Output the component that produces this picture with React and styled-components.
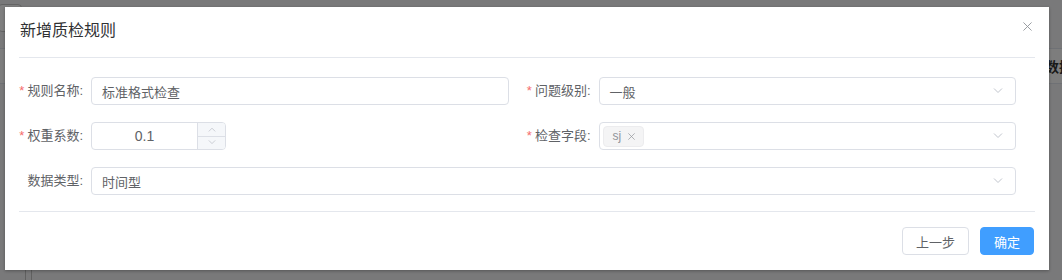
import React from "react";
import styled, { createGlobalStyle } from "styled-components";

const GlobalStyle = createGlobalStyle`
  html, body {
    margin: 0;
    padding: 0;
    width: 1062px;
    height: 280px;
    overflow: hidden;
  }
  body {
    font-family: "Liberation Sans", "Noto Sans CJK SC", sans-serif;
    background: #f2f3f5;
  }
`;

const Page = styled.div`
  position: relative;
  width: 1062px;
  height: 280px;
  overflow: hidden;
  background: #f2f3f5;
`;

const BackToolbar = styled.div`
  height: 48px;
  display: flex;
  align-items: flex-start;
  padding: 4px 0 0 0;
  box-sizing: border-box;
`;

const BackButton = styled.div`
  width: 22px;
  height: 26px;
  margin-left: -2px;
  border: 1px solid #c8c8c8;
  border-radius: 4px;
  background: #fff;
`;

const BackTableHead = styled.div`
  height: 36px;
  display: flex;
  align-items: center;
  border-top: 1px solid #dfe3ea;
  border-bottom: 1px solid #dfe3ea;
  background: #fafafa;
  box-sizing: border-box;
  overflow: hidden;
`;

const BackCell = styled.div`
  flex: 0 0 ${(p) => p.w}px;
  font-size: 14px;
  font-weight: bold;
  color: #333;
  white-space: nowrap;
  overflow: hidden;
`;

const BackBody = styled.div`
  display: flex;
  height: 200px;
`;

const BackLine = styled.div`
  margin-left: ${(p) => p.ml}px;
  width: 1px;
  background: #c0c0c0;
`;

const Mask = styled.div`
  position: absolute;
  inset: 0;
  background: rgba(0, 0, 0, 0.5);
`;

const Dialog = styled.div`
  position: absolute;
  top: 7px;
  left: 5px;
  width: 1044px;
  background: #fff;
  box-shadow: 0 1px 3px rgba(0, 0, 0, 0.3);
`;

const Header = styled.div`
  display: flex;
  justify-content: space-between;
  align-items: flex-start;
  padding: 12px 17px 14px 15px;
`;

const Title = styled.span`
  font-size: 16px;
  line-height: 24px;
  color: #303133;
`;

const Close = styled.span`
  display: flex;
  margin-top: 3px;
  color: #909399;
`;

const Divider = styled.div`
  height: 1px;
  margin: 0 14px;
  background: #e4e7ed;
`;

const Form = styled.div`
  display: grid;
  grid-template-columns: 1fr 1fr;
  column-gap: 10px;
  row-gap: 17px;
  padding: 19px 33px 16px 6px;
`;

const Item = styled.div`
  display: flex;
  align-items: center;
  height: 28px;
  grid-column: ${(p) => (p.wide ? "1 / span 2" : "auto")};
`;

const Label = styled.label`
  flex: 0 0 80px;
  box-sizing: border-box;
  padding-right: 8px;
  text-align: right;
  font-size: 13px;
  line-height: 28px;
  color: #606266;
  white-space: nowrap;
`;

const Star = styled.span`
  color: #f56c6c;
  margin-right: 3px;
`;

const Field = styled.div`
  flex: 1;
  height: 28px;
  box-sizing: border-box;
  border: 1px solid #dcdfe6;
  border-radius: 4px;
  display: flex;
  align-items: center;
  padding: 0 ${(p) => (p.select ? "12px" : "10px")} 0 ${(p) => (p.tags ? "3px" : "10px")};
  font-size: 13px;
  color: #606266;
  background: #fff;
`;

const Value = styled.span`
  flex: 1;
  white-space: nowrap;
`;

const NumberBox = styled.div`
  flex: 0 0 135px;
  height: 28px;
  box-sizing: border-box;
  border: 1px solid #dcdfe6;
  border-radius: 4px;
  display: flex;
  overflow: hidden;
  font-size: 14px;
  color: #606266;
`;

const NumberValue = styled.div`
  flex: 1;
  display: flex;
  align-items: center;
  justify-content: center;
`;

const Steps = styled.div`
  flex: 0 0 27px;
  display: flex;
  flex-direction: column;
  border-left: 1px solid #dcdfe6;
  background: #f5f7fa;
`;

const Step = styled.div`
  flex: 1;
  display: flex;
  align-items: center;
  justify-content: center;
  color: #c0c4cc;
  border-top: ${(p) => (p.down ? "1px solid #dcdfe6" : "none")};
`;

const Tag = styled.span`
  display: inline-flex;
  align-items: center;
  gap: 7px;
  height: 21px;
  padding: 0 8px 0 9px;
  box-sizing: border-box;
  border: 1px solid #ececee;
  border-radius: 4px;
  background: #f4f4f5;
  font-size: 12px;
  color: #909399;
`;

const Footer = styled.div`
  display: flex;
  justify-content: flex-end;
  gap: 11px;
  padding: 15px 15px 15px;
`;

const Button = styled.button`
  height: 28px;
  padding: 0 13px;
  border-radius: 4px;
  font-family: inherit;
  font-size: 13px;
  border: 1px solid ${(p) => (p.primary ? "#409eff" : "#dcdfe6")};
  background: ${(p) => (p.primary ? "#409eff" : "#fff")};
  color: ${(p) => (p.primary ? "#fff" : "#606266")};
`;

const Chevron = ({ up, size = 10 }) => (
  <svg width={size} height={size * 0.6} viewBox="0 0 10 6" fill="none">
    <path
      d={up ? "M1 5.5L5 1.5L9 5.5" : "M1 0.5L5 4.5L9 0.5"}
      stroke="currentColor"
      strokeWidth="1"
    />
  </svg>
);

const Cross = ({ size }) => (
  <svg width={size} height={size} viewBox="0 0 10 10" fill="none">
    <path d="M0.5 0.5L9.5 9.5M9.5 0.5L0.5 9.5" stroke="currentColor" strokeWidth="1" />
  </svg>
);

const Arrow = styled.span`
  display: flex;
  color: #c0c4cc;
`;

export default function App() {
  return (
    <Page>
      <GlobalStyle />
      <BackToolbar>
        <BackButton />
      </BackToolbar>
      <BackTableHead>
        <BackCell w={1045} />
        <BackCell w={17}>数据</BackCell>
      </BackTableHead>
      <BackBody>
        <BackLine ml={25} />
        <BackLine ml={5} />
      </BackBody>
      <Mask />
      <Dialog>
        <Header>
          <Title>新增质检规则</Title>
          <Close>
            <Cross size={9} />
          </Close>
        </Header>
        <Divider />
        <Form>
          <Item>
            <Label>
              <Star>*</Star>规则名称:
            </Label>
            <Field>
              <Value>标准格式检查</Value>
            </Field>
          </Item>
          <Item>
            <Label>
              <Star>*</Star>问题级别:
            </Label>
            <Field select>
              <Value>一般</Value>
              <Arrow>
                <Chevron />
              </Arrow>
            </Field>
          </Item>
          <Item>
            <Label>
              <Star>*</Star>权重系数:
            </Label>
            <NumberBox>
              <NumberValue>0.1</NumberValue>
              <Steps>
                <Step>
                  <Chevron up size={8} />
                </Step>
                <Step down>
                  <Chevron size={8} />
                </Step>
              </Steps>
            </NumberBox>
          </Item>
          <Item>
            <Label>
              <Star>*</Star>检查字段:
            </Label>
            <Field select tags>
              <Value>
                <Tag>
                  sj
                  <Cross size={7} />
                </Tag>
              </Value>
              <Arrow>
                <Chevron />
              </Arrow>
            </Field>
          </Item>
          <Item wide>
            <Label>数据类型:</Label>
            <Field select>
              <Value>时间型</Value>
              <Arrow>
                <Chevron />
              </Arrow>
            </Field>
          </Item>
        </Form>
        <Divider />
        <Footer>
          <Button>上一步</Button>
          <Button primary>确定</Button>
        </Footer>
      </Dialog>
    </Page>
  );
}
